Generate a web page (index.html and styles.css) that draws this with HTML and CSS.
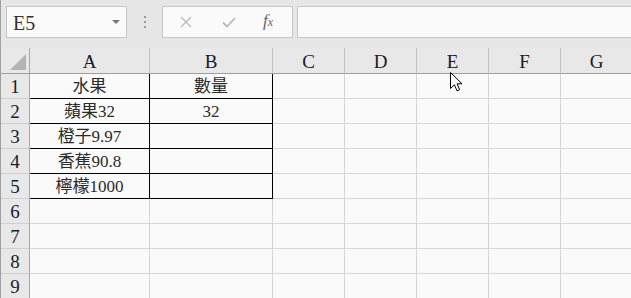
FILE: index.html
```html
<!doctype html>
<html lang="zh-Hant">
  <head>
    <meta charset="UTF-8" />
    <title>Excel</title>
    <link rel="stylesheet" href="styles.css">
  </head>
  <body>
    <div class="app">
      <div class="toolbar">
        <div class="namebox">
          <span class="ref">E5</span>
          <span class="drop"></span>
        </div>
        <div class="grip"><i></i><i></i><i></i></div>
        <div class="fxbox">
          <svg class="ico" width="12" height="12" viewBox="0 0 12 12">
            <path d="M1 1 L11 11 M11 1 L1 11" stroke="#b8b8b8" stroke-width="1.3" fill="none" />
          </svg>
          <svg class="ico" width="14" height="11" viewBox="0 0 14 11">
            <path d="M1 5.5 L5 9.5 L13 1" stroke="#b8b8b8" stroke-width="1.8" fill="none" />
          </svg>
          <span class="fx">f<sub>x</sub></span>
        </div>
        <div class="formula"></div>
      </div>

      <div class="sheet">
        <div class="corner"><span class="tri"></span></div>
        <div class="colhead">A</div>
        <div class="colhead">B</div>
        <div class="colhead">C</div>
        <div class="colhead">D</div>
        <div class="colhead">E</div>
        <div class="colhead">F</div>
        <div class="colhead">G</div>

        <div class="rowhead">1</div>
        <div class="cell box">水果</div>
        <div class="cell box">數量</div>
        <div class="cell"></div><div class="cell"></div><div class="cell"></div><div class="cell"></div><div class="cell"></div>

        <div class="rowhead">2</div>
        <div class="cell box">蘋果32</div>
        <div class="cell box">32</div>
        <div class="cell"></div><div class="cell"></div><div class="cell"></div><div class="cell"></div><div class="cell"></div>

        <div class="rowhead">3</div>
        <div class="cell box">橙子9.97</div>
        <div class="cell box"></div>
        <div class="cell"></div><div class="cell"></div><div class="cell"></div><div class="cell"></div><div class="cell"></div>

        <div class="rowhead">4</div>
        <div class="cell box">香蕉90.8</div>
        <div class="cell box"></div>
        <div class="cell"></div><div class="cell"></div><div class="cell"></div><div class="cell"></div><div class="cell"></div>

        <div class="rowhead">5</div>
        <div class="cell box">檸檬1000</div>
        <div class="cell box"></div>
        <div class="cell"></div><div class="cell"></div><div class="cell"></div><div class="cell"></div><div class="cell"></div>

        <div class="rowhead">6</div>
        <div class="cell"></div><div class="cell"></div><div class="cell"></div><div class="cell"></div><div class="cell"></div><div class="cell"></div><div class="cell"></div>
        <div class="rowhead">7</div>
        <div class="cell"></div><div class="cell"></div><div class="cell"></div><div class="cell"></div><div class="cell"></div><div class="cell"></div><div class="cell"></div>
        <div class="rowhead">8</div>
        <div class="cell"></div><div class="cell"></div><div class="cell"></div><div class="cell"></div><div class="cell"></div><div class="cell"></div><div class="cell"></div>
        <div class="rowhead">9</div>
        <div class="cell"></div><div class="cell"></div><div class="cell"></div><div class="cell"></div><div class="cell"></div><div class="cell"></div><div class="cell"></div>
      </div>

      <svg class="cursor" width="13" height="20" viewBox="0 0 13 20">
        <path d="M0.5 0.5 L0.5 16.5 L4.4 12.8 L7 18.8 L9.6 17.7 L7.1 11.8 L12 11.8 Z" fill="#fff" stroke="#000" stroke-width="1" stroke-linejoin="miter" />
      </svg>
    </div>
  </body>
</html>
```

FILE: styles.css
```css
body {
  margin: 0;
  padding: 0;
  background-color: #e6e6e6;
  font-family: "Liberation Serif", "Noto Sans CJK TC", serif;
  color: #1e1e1e;
  overflow: hidden;
}
.app {
  position: relative;
  width: 631px;
  height: 298px;
  border-left: 1px solid #a0a0a0;
  box-sizing: border-box;
  overflow: hidden;
}
.toolbar {
  display: flex;
  align-items: flex-start;
  height: 48px;
  padding: 6px 0 0 5px;
  box-sizing: border-box;
}
.namebox {
  width: 121px;
  height: 32px;
  box-sizing: border-box;
  border: 1px solid #c6c6c6;
  background-color: #fafafa;
  display: flex;
  align-items: center;
  justify-content: space-between;
  padding: 0 6px 0 6px;
}
.ref {
  font-family: "Liberation Serif", serif;
  font-size: 20px;
  color: #333;
  padding-top: 2px;
}
.drop {
  width: 0;
  height: 0;
  border-left: 4px solid transparent;
  border-right: 4px solid transparent;
  border-top: 4px solid #777;
}
.grip {
  width: 35px;
  height: 32px;
  display: flex;
  flex-direction: column;
  align-items: center;
  justify-content: center;
  gap: 3px;
}
.grip i {
  display: block;
  width: 2px;
  height: 2px;
  background-color: #9a9a9a;
}
.fxbox {
  width: 131px;
  height: 32px;
  box-sizing: border-box;
  border: 1px solid #c6c6c6;
  background-color: #fafafa;
  display: flex;
  align-items: center;
  padding: 0 0 0 17px;
  gap: 30px;
}
.ico {
  display: block;
}
.fx {
  font-family: "Liberation Serif", serif;
  font-style: italic;
  font-size: 17px;
  color: #666;
  margin-left: -3px;
  padding-bottom: 2px;
}
.fx sub {
  font-size: 12px;
  vertical-align: 0;
}
.formula {
  flex: 1;
  height: 32px;
  margin-left: 4px;
  box-sizing: border-box;
  border: 1px solid #c6c6c6;
  border-right: none;
  background-color: #fafafa;
}
.sheet {
  display: grid;
  grid-template-columns: 29px 120px 123px 72px 72px 72px 72px 72px;
  grid-template-rows: 26px;
  grid-auto-rows: 25px;
  background-color: #fafafa;
}
.corner,
.colhead,
.rowhead {
  background-color: #e8e8e8;
  box-sizing: border-box;
  font-size: 19px;
  display: flex;
  align-items: center;
  justify-content: center;
  color: #1a1a2e;
}
.corner {
  border-right: 1px solid #a8a8a8;
  border-bottom: 1px solid #9e9e9e;
  position: relative;
}
.tri {
  position: absolute;
  right: 3px;
  bottom: 3px;
  width: 0;
  height: 0;
  border-left: 16px solid transparent;
  border-bottom: 16px solid #b4b4b4;
}
.colhead {
  border-right: 1px solid #c4c4c4;
  border-bottom: 1px solid #9e9e9e;
  padding-top: 3px;
}
.rowhead {
  border-right: 1px solid #a8a8a8;
  border-bottom: 1px solid #cfcfcf;
  padding-top: 2px;
}
.cell {
  box-sizing: border-box;
  border-right: 1px solid #d6d6d6;
  border-bottom: 1px solid #d6d6d6;
  font-size: 17px;
  color: #2a2a2a;
  display: flex;
  align-items: flex-end;
  justify-content: center;
  line-height: 22px;
  white-space: nowrap;
  overflow: hidden;
}
.cell.box {
  border-right-color: #000;
  border-bottom-color: #000;
}
.cursor {
  position: absolute;
  left: 449px;
  top: 72px;
}
```
